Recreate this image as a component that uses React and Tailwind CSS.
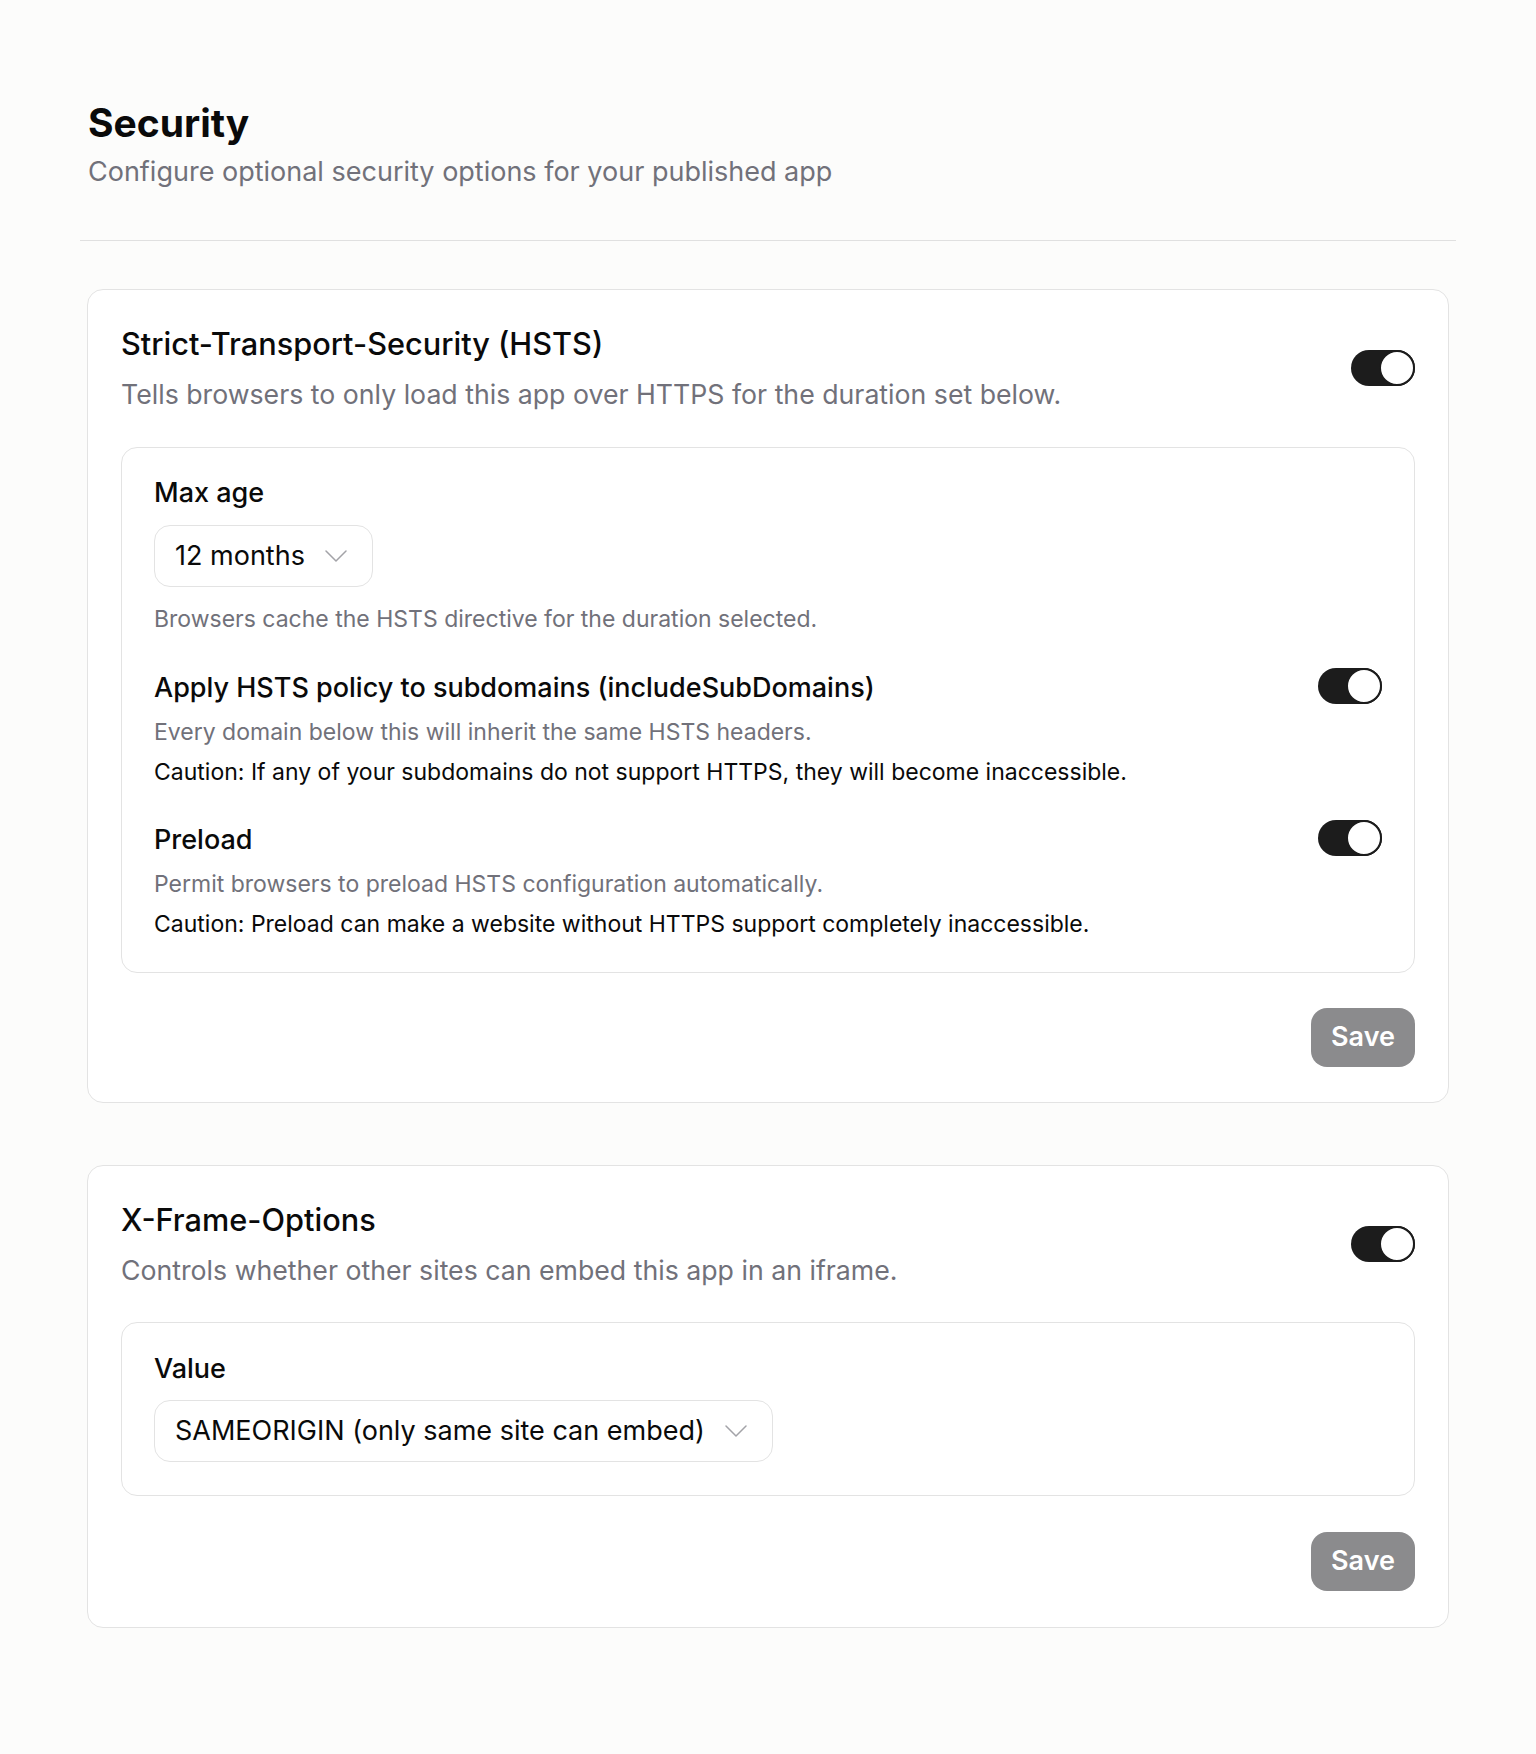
function Toggle({ className = "" }) {
  return (
    <div className={"relative h-9 w-16 shrink-0 rounded-full bg-[#1c1c1c] " + className}>
      <div className="absolute right-0 top-0 h-9 w-9 rounded-full border-2 border-[#1c1c1c] bg-white" />
    </div>
  );
}

function Select({ label }) {
  return (
    <div className="inline-flex h-[62px] items-center gap-[20px] rounded-2xl border border-[#e3e3e3] bg-white pl-[20px] pr-[25px]">
      <span className="text-[27px] leading-8 text-[#0a0a0a]">{label}</span>
      <svg width="22" height="12" viewBox="0 0 22 12" fill="none">
        <polyline points="1,1 11,11 21,1" stroke="#a3a3a8" strokeWidth="1.5" strokeLinecap="round" strokeLinejoin="round" />
      </svg>
    </div>
  );
}

function SaveButton() {
  return (
    <div className="flex justify-end">
      <button className="h-[59px] rounded-2xl bg-[#8b8b8d] px-[20px] text-[27px] font-semibold text-white">
        Save
      </button>
    </div>
  );
}

function Option({ title, desc, caution, className }) {
  return (
    <div className={"flex items-start justify-between " + className}>
      <div>
        <div className="text-[27px] font-medium leading-8 text-[#0a0a0a]">{title}</div>
        <div className="mt-[14px] text-[23px] leading-7 text-[#71717a]">{desc}</div>
        <div className="mt-[12px] text-[23px] leading-7 text-[#0a0a0a]">{caution}</div>
      </div>
      <Toggle className="-mt-1" />
    </div>
  );
}

export default function App() {
  return (
    <div className="min-h-screen bg-[#fcfcfb] px-[80px] pt-[101px] pb-[120px]" style={{ fontFamily: "Inter, 'Noto Sans', sans-serif" }}>
      {/* Header */}
      <div className="px-2">
        <h1 className="text-[39px] font-bold leading-[44px] text-[#0a0a0a]">Security</h1>
        <p className="mt-[11px] text-[27px] leading-8 text-[#71717a]">
          Configure optional security options for your published app
        </p>
      </div>
      <div className="mt-[52px] h-px bg-[#e0e0e0]" />

      {/* HSTS */}
      <section className="mx-[7px] mt-[48px] rounded-2xl border border-[#e3e3e3] bg-white px-[33px] pt-[36px] pb-[35px]">
        <div className="flex items-center justify-between">
          <div>
            <h2 className="text-[30.7px] font-medium leading-9 text-[#0a0a0a]">Strict-Transport-Security (HSTS)</h2>
            <p className="mt-[16px] text-[26.7px] leading-8 text-[#71717a]">
              Tells browsers to only load this app over HTTPS for the duration set below.
            </p>
          </div>
          <Toggle />
        </div>

        <div className="mt-[37px] rounded-2xl border border-[#e3e3e3] px-[32px] pt-[29px] pb-[34px]">
          <div className="text-[27px] font-medium leading-8 text-[#0a0a0a]">Max age</div>
          <div className="mt-4">
            <Select label="12 months" />
          </div>
          <div className="mt-[18px] text-[23px] leading-7 text-[#71717a]">
            Browsers cache the HSTS directive for the duration selected.
          </div>

          <Option
            className="mt-[39px]"
            title="Apply HSTS policy to subdomains (includeSubDomains)"
            desc="Every domain below this will inherit the same HSTS headers."
            caution="Caution: If any of your subdomains do not support HTTPS, they will become inaccessible."
          />
          <Option
            className="mt-[38px]"
            title="Preload"
            desc="Permit browsers to preload HSTS configuration automatically."
            caution="Caution: Preload can make a website without HTTPS support completely inaccessible."
          />
        </div>

        <div className="mt-[35px]">
          <SaveButton />
        </div>
      </section>

      {/* X-Frame-Options */}
      <section className="mx-[7px] mt-[62px] rounded-2xl border border-[#e3e3e3] bg-white px-[33px] pt-[36px] pb-[36px]">
        <div className="flex items-center justify-between">
          <div>
            <h2 className="text-[30.7px] font-medium leading-9 text-[#0a0a0a]">X-Frame-Options</h2>
            <p className="mt-[16px] text-[26.7px] leading-8 text-[#71717a]">
              Controls whether other sites can embed this app in an iframe.
            </p>
          </div>
          <Toggle />
        </div>

        <div className="mt-[36px] rounded-2xl border border-[#e3e3e3] px-[32px] pt-[30px] pb-[33px]">
          <div className="text-[27px] font-medium leading-8 text-[#0a0a0a]">Value</div>
          <div className="mt-[15px]">
            <Select label="SAMEORIGIN (only same site can embed)" />
          </div>
        </div>

        <div className="mt-[36px]">
          <SaveButton />
        </div>
      </section>
    </div>
  );
}
